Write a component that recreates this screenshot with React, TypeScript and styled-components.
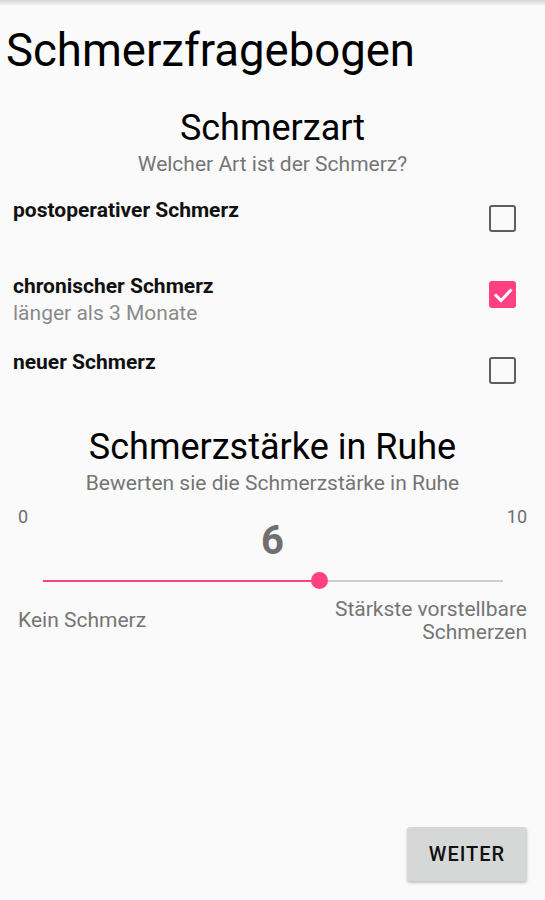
import React from "react";
import styled, { createGlobalStyle } from "styled-components";

const GlobalStyle = createGlobalStyle`
  html, body {
    margin: 0;
    padding: 0;
    background: #fafafa;
  }
  body {
    font-family: Roboto, "Noto Sans", "Liberation Sans", sans-serif;
    -webkit-font-smoothing: antialiased;
  }
  * { box-sizing: border-box; }
`;

const Page = styled.div`
  min-height: 900px;
  display: flex;
  flex-direction: column;
  background: #fafafa;
`;

const TopShade = styled.div`
  height: 6px;
  background: linear-gradient(#d6d6d6, #fafafa);
`;

const Title = styled.h1`
  margin: 18px 0 0;
  padding-left: 6px;
  font-size: 45.5px;
  line-height: 54px;
  font-weight: 400;
  color: #000;
`;

const SectionHeader = styled.div<{ $top: number }>`
  margin-top: ${(p) => p.$top}px;
  text-align: center;
`;

const SectionTitle = styled.div`
  font-size: 36px;
  line-height: 42px;
  color: #000;
`;

const SectionSub = styled.div`
  margin-top: 3px;
  font-size: 21px;
  line-height: 24px;
  color: #757575;
`;

const OptionList = styled.div`
  margin-top: 22px;
  display: flex;
  flex-direction: column;
`;

const OptionRow = styled.label`
  min-height: 76px;
  display: flex;
  align-items: flex-start;
  justify-content: space-between;
  padding: 0 29px 0 13px;
`;

const OptionText = styled.div`
  display: flex;
  flex-direction: column;
`;

const OptionLabel = styled.div`
  font-size: 21px;
  line-height: 24px;
  font-weight: 700;
  color: #111;
`;

const OptionHint = styled.div`
  margin-top: 3px;
  font-size: 21px;
  line-height: 24px;
  color: #8a8a8a;
`;

const Box = styled.div<{ $checked: boolean }>`
  margin-top: 7px;
  width: 27px;
  height: 27px;
  border-radius: 3px;
  border: ${(p) => (p.$checked ? "none" : "2.5px solid #5e5e5e")};
  background: ${(p) => (p.$checked ? "#ff4081" : "transparent")};
  display: flex;
  align-items: center;
  justify-content: center;
  flex-shrink: 0;
`;

const ScaleEnds = styled.div`
  margin-top: 11px;
  padding: 0 18px;
  display: grid;
  grid-template-columns: 1fr auto 1fr;
  align-items: start;
`;

const EndValue = styled.div<{ $right?: boolean }>`
  font-size: 18px;
  line-height: 22px;
  color: #6f6f6f;
  text-align: ${(p) => (p.$right ? "right" : "left")};
`;

const BigValue = styled.div`
  margin-top: 11.5px;
  font-size: 40px;
  line-height: 46px;
  font-weight: 700;
  color: #6f6f6f;
  text-align: center;
`;

const SliderWrap = styled.div`
  margin: 8px 42px 0 43px;
  height: 18px;
  position: relative;
`;

const TrackBase = styled.div`
  position: absolute;
  left: 0;
  right: 0;
  top: 8px;
  height: 2px;
  background: #cfcfcf;
`;

const TrackFill = styled.div`
  position: absolute;
  left: 0;
  top: 8px;
  height: 2px;
  background: #ff4081;
`;

const Thumb = styled.div`
  position: absolute;
  top: 0.5px;
  width: 17px;
  height: 17px;
  margin-left: -8.5px;
  border-radius: 50%;
  background: #ff4081;
`;

const ScaleLabels = styled.div`
  margin-top: 8px;
  padding: 0 18px;
  display: flex;
  align-items: center;
  justify-content: space-between;
`;

const ScaleLabel = styled.div<{ $right?: boolean }>`
  font-size: 21px;
  line-height: 23px;
  color: #757575;
  text-align: ${(p) => (p.$right ? "right" : "left")};
`;

const Footer = styled.div`
  margin-top: auto;
  padding: 0 18px 19px 0;
  display: flex;
  justify-content: flex-end;
`;

const Button = styled.button`
  width: 120px;
  height: 54px;
  border: none;
  border-radius: 3px;
  background: #d6d7d7;
  box-shadow: 0 2px 3px rgba(0, 0, 0, 0.22);
  font-family: Roboto, "Noto Sans", "Liberation Sans", sans-serif;
  font-size: 20px;
  line-height: 24px;
  font-weight: 500;
  letter-spacing: 0.05em;
  color: #111;
  padding: 0;
`;

const Check = () => (
  <svg width="26" height="26" viewBox="0 0 26 26">
    <polyline
      points="6,13.5 11,18.5 20.5,8.5"
      fill="none"
      stroke="#fff"
      strokeWidth="3"
      strokeLinecap="square"
    />
  </svg>
);

const options = [
  { label: "postoperativer Schmerz", checked: false },
  { label: "chronischer Schmerz", hint: "länger als 3 Monate", checked: true },
  { label: "neuer Schmerz", checked: false },
];

export default function App() {
  const value = 6;
  const pct = (value / 10) * 100;
  return (
    <>
      <GlobalStyle />
      <Page>
        <TopShade />
        <Title>Schmerzfragebogen</Title>

        <SectionHeader $top={29}>
          <SectionTitle>Schmerzart</SectionTitle>
          <SectionSub>Welcher Art ist der Schmerz?</SectionSub>
        </SectionHeader>

        <OptionList>
          {options.map((o) => (
            <OptionRow key={o.label}>
              <OptionText>
                <OptionLabel>{o.label}</OptionLabel>
                {o.hint && <OptionHint>{o.hint}</OptionHint>}
              </OptionText>
              <Box $checked={o.checked}>{o.checked && <Check />}</Box>
            </OptionRow>
          ))}
        </OptionList>

        <SectionHeader $top={0}>
          <SectionTitle>Schmerzstärke in Ruhe</SectionTitle>
          <SectionSub>Bewerten sie die Schmerzstärke in Ruhe</SectionSub>
        </SectionHeader>

        <ScaleEnds>
          <EndValue>0</EndValue>
          <BigValue>{value}</BigValue>
          <EndValue $right>10</EndValue>
        </ScaleEnds>

        <SliderWrap>
          <TrackBase />
          <TrackFill style={{ width: `${pct}%` }} />
          <Thumb style={{ left: `${pct}%` }} />
        </SliderWrap>

        <ScaleLabels>
          <ScaleLabel>Kein Schmerz</ScaleLabel>
          <ScaleLabel $right>
            Stärkste vorstellbare
            <br />
            Schmerzen
          </ScaleLabel>
        </ScaleLabels>

        <Footer>
          <Button>WEITER</Button>
        </Footer>
      </Page>
    </>
  );
}
